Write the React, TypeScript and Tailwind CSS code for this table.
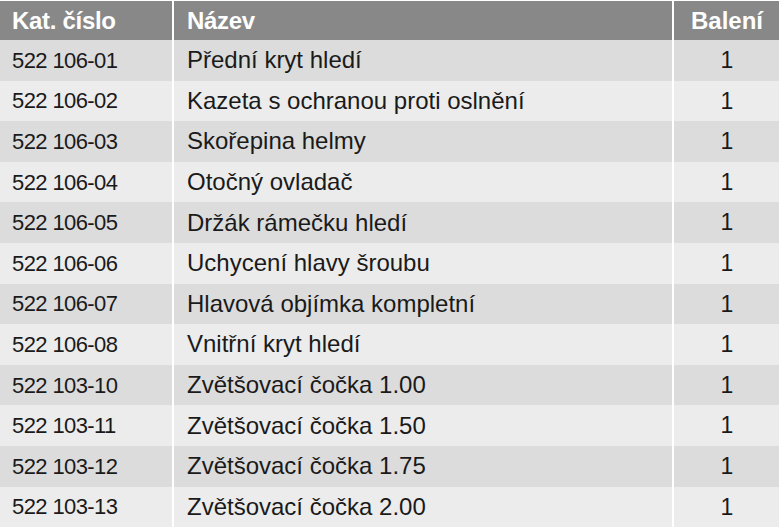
const rows = [
  ["522 106-01", "Přední kryt hledí", "1"],
  ["522 106-02", "Kazeta s ochranou proti oslnění", "1"],
  ["522 106-03", "Skořepina helmy", "1"],
  ["522 106-04", "Otočný ovladač", "1"],
  ["522 106-05", "Držák rámečku hledí", "1"],
  ["522 106-06", "Uchycení hlavy šroubu", "1"],
  ["522 106-07", "Hlavová objímka kompletní", "1"],
  ["522 106-08", "Vnitřní kryt hledí", "1"],
  ["522 103-10", "Zvětšovací čočka 1.00", "1"],
  ["522 103-11", "Zvětšovací čočka 1.50", "1"],
  ["522 103-12", "Zvětšovací čočka 1.75", "1"],
  ["522 103-13", "Zvětšovací čočka 2.00", "1"],
]

export default function App() {
  return (
    <div
      className="w-[779px] h-[529px] bg-white pt-px overflow-hidden text-[#1a1a1a]"
      style={{ fontFamily: '"Liberation Sans", Arial, sans-serif' }}
    >
      <div className="grid grid-cols-[172px_498px_106px] gap-x-[2px] bg-white">
        {/* hlavička */}
        <div className="h-[39px] bg-[#888888] text-white font-bold text-[24px] tracking-[-0.3px] pl-3 flex items-center">Kat. číslo</div>
        <div className="h-[39px] bg-[#888888] text-white font-bold text-[24px] tracking-[-0.3px] pl-[13px] flex items-center">Název</div>
        <div className="h-[39px] bg-[#888888] text-white font-bold text-[24px] flex items-center justify-center">Balení</div>

        {rows.map((r, i) => {
          const bg = i % 2 === 0 ? "bg-[#dcdcdc]" : "bg-[#ececec]"
          return [
            <div key={i + "a"} className={`h-[40.6px] ${bg} text-[22px] tracking-[-0.6px] pl-3 flex items-center`}>{r[0]}</div>,
            <div key={i + "b"} className={`h-[40.6px] ${bg} text-[24px] pl-[13px] flex items-center`}>{r[1]}</div>,
            <div key={i + "c"} className={`h-[40.6px] ${bg} text-[23px] flex items-center justify-center`}>{r[2]}</div>,
          ]
        })}
      </div>
    </div>
  )
}
